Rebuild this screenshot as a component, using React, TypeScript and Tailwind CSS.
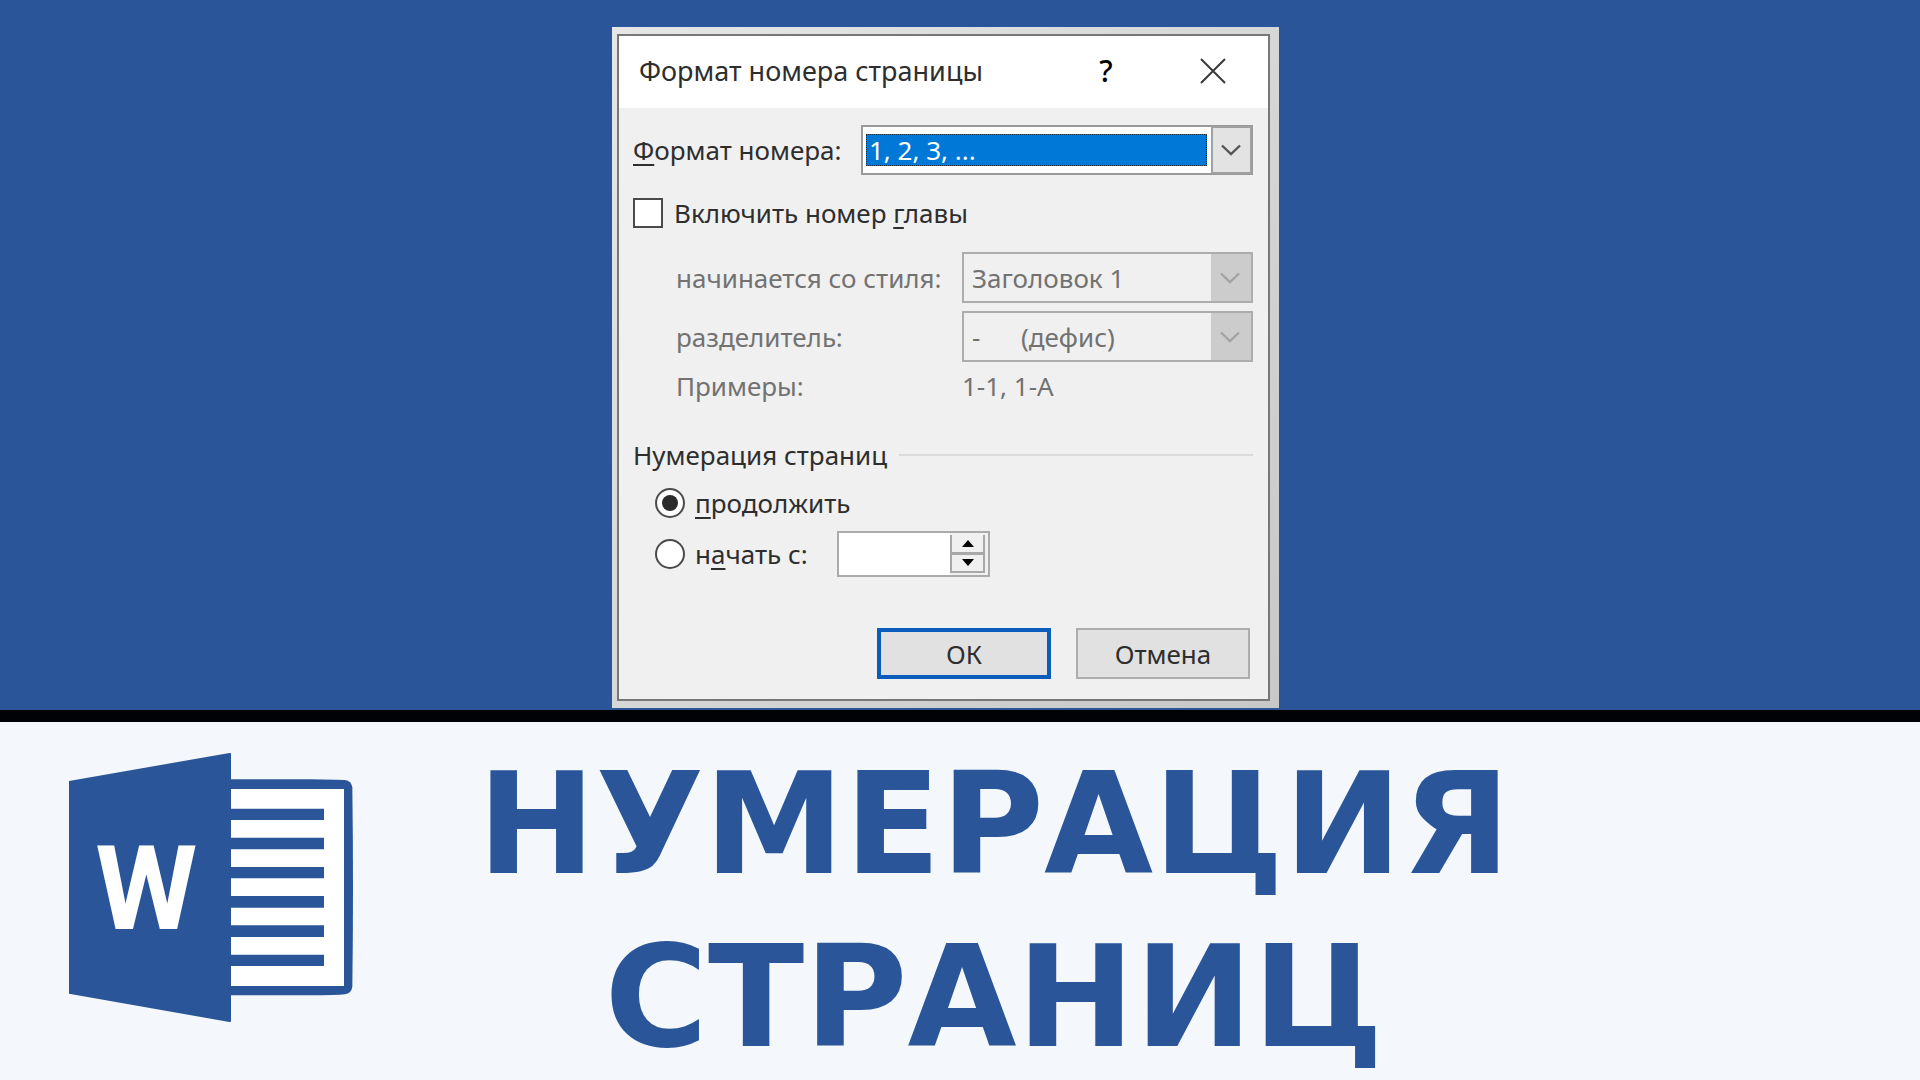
import type { ReactNode } from "react";

function Chevron({ className }: { className: string }) {
  return (
    <svg viewBox="0 0 20 12" className={`h-3 w-5 ${className}`} fill="none" stroke="currentColor" strokeWidth="2.4" aria-hidden="true">
      <path d="M1 1.5 L10 10 L19 1.5" />
    </svg>
  );
}

function DisabledCombo({ id, children }: { id: string; children: ReactNode }) {
  return (
    <div className="flex h-[51px] w-[291px] border-2 border-[#adadad] bg-[#f0f0f0]">
      <select id={id} disabled className="min-w-0 flex-1 appearance-none bg-transparent pl-2 text-[#727272] opacity-100">
        {children}
      </select>
      <span className="flex w-10 items-center justify-center bg-[#cccccc] pr-[2px]">
        <Chevron className="text-[#a3a3a3]" />
      </span>
    </div>
  );
}

function Key({ children }: { children: string }) {
  return <span className="underline decoration-2 underline-offset-4">{children}</span>;
}

const radioStyle =
  "grid size-[30px] appearance-none place-items-center rounded-full border-2 border-[#4a4a4a] bg-white before:size-4 before:rounded-full checked:before:bg-[#2b2b2b]";

function PageNumberDialog() {
  return (
    <div className="w-[667px] bg-linear-to-br from-[#e6e6e6] to-[#c8c8c8] pt-[7px] pr-[9px] pb-[7px] pl-[5px]">
      <form
        role="dialog"
        aria-labelledby="dialog-title"
        onSubmit={(e) => e.preventDefault()}
        className="border-2 border-[#777777] bg-[#f0f0f0] font-['Noto_Sans','Open_Sans',sans-serif] text-[26px] leading-8 text-[#2e2e2e]"
      >
        <header className="flex h-[72px] items-center bg-white pr-[42px] pb-[3px] pl-5">
          <h2 id="dialog-title" className="flex-1 text-[27px]">Формат номера страницы</h2>
          <button type="button" aria-label="Справка" className="w-8 text-center text-[30px] font-medium text-black">?</button>
          <button type="button" aria-label="Закрыть" className="ml-[78px]">
            <svg viewBox="0 0 26 26" className="size-[26px]" stroke="#3a3a3a" strokeWidth="2" aria-hidden="true">
              <path d="M1 1 L25 25 M25 1 L1 25" />
            </svg>
          </button>
        </header>

        <div className="pt-[17px] pr-[15px] pb-5 pl-[14px]">
          <div className="flex items-center justify-between">
            <label htmlFor="format"><Key>Ф</Key>ормат номера:</label>
            <div className="flex h-[50px] w-[392px] border-2 border-[#9a9a9a] bg-white">
              <select
                id="format"
                className="my-[7px] mr-[4px] ml-[3px] min-w-0 flex-1 appearance-none border border-dotted border-[#20303f] bg-[#0078d7] pl-[2px] leading-7 text-white"
              >
                <option>1, 2, 3, ...</option>
              </select>
              <span className="-my-px -mr-px flex w-[41px] items-center justify-center border-2 border-[#a0a0a0] bg-[#e3e3e3] pr-[2px]">
                <Chevron className="text-[#555555]" />
              </span>
            </div>
          </div>

          <label className="mt-[23px] flex h-[30px] items-center gap-[11px]">
            <input type="checkbox" className="size-[30px] appearance-none border-2 border-[#4a4a4a] bg-white" />
            <span>Включить номер <Key>г</Key>лавы</span>
          </label>

          <div className="mt-6 pl-[43px] text-[#727272]">
            <div className="flex items-center justify-between">
              <label htmlFor="style">начинается со стиля:</label>
              <DisabledCombo id="style">
                <option>Заголовок 1</option>
              </DisabledCombo>
            </div>
            <div className="mt-2 flex items-center justify-between">
              <label htmlFor="separator">разделитель:</label>
              <DisabledCombo id="separator">
                <option>{"-\u00a0\u00a0\u00a0\u00a0\u00a0\u00a0(дефис)"}</option>
              </DisabledCombo>
            </div>
            <div className="mt-2 flex justify-between">
              <span>Примеры:</span>
              <span className="w-[291px]">1-1, 1-A</span>
            </div>
          </div>

          <div role="radiogroup" aria-labelledby="numbering" className="mt-[37px]">
            <div className="flex items-center gap-3">
              <h3 id="numbering">Нумерация страниц</h3>
              <span className="h-[2px] flex-1 bg-[#dadada]" />
            </div>
            <label className="mt-[17px] ml-[22px] flex h-[30px] items-center gap-[10px]">
              <input type="radio" name="numbering" defaultChecked className={radioStyle} />
              <span><Key>п</Key>родолжить</span>
            </label>
            <div className="mt-[13px] ml-[22px] flex items-center">
              <label className="flex w-[182px] items-center gap-[10px]">
                <input type="radio" name="numbering" className={radioStyle} />
                <span>н<Key>а</Key>чать с:</span>
              </label>
              <div className="flex h-[46px] w-[153px] border-2 border-[#ababab] bg-[#f0f0f0] pr-[3px]">
                <input type="text" aria-label="Начать с" className="min-w-0 flex-1 bg-white px-2" />
                <div className="my-[2px] flex w-[35px] flex-col">
                  <button type="button" aria-label="Увеличить" className="flex flex-1 items-center justify-center border-2 border-t-0 border-[#a8a8a8]">
                    <svg viewBox="0 0 12 7" className="h-[7px] w-3" aria-hidden="true"><path d="M0 7 L6 0 L12 7 Z" /></svg>
                  </button>
                  <button type="button" aria-label="Уменьшить" className="flex flex-1 items-center justify-center border-2 border-t border-[#a8a8a8]">
                    <svg viewBox="0 0 12 7" className="h-[7px] w-3" aria-hidden="true"><path d="M0 0 L6 7 L12 0 Z" /></svg>
                  </button>
                </div>
              </div>
            </div>
          </div>

          <div className="mt-[51px] mr-[3px] flex justify-end gap-[25px]">
            <button type="submit" className="h-[51px] w-[174px] border-4 border-[#0a5cbd] bg-[#e1e1e1]">ОК</button>
            <button type="button" className="h-[51px] w-[174px] border-2 border-[#adadad] bg-[#e1e1e1]">Отмена</button>
          </div>
        </div>
      </form>
    </div>
  );
}

function WordLogo() {
  return (
    <svg viewBox="57 69 852 807" className="h-[269px] w-[284px] shrink-0" role="img" aria-label="Word">
      <path d="M530 148 H780 Q860 149 885 150 Q904 152 907 172 Q911 470 907 770 Q904 790 885 793 Q860 796 780 796 H530 Z" fill="#2a5699" />
      <path d="M542 177 H882 V768 H542 Z" fill="#ffffff" />
      <path
        d="M540 236 H822 V270 H540 Z M540 323 H822 V358 H540 Z M540 411 H822 V445 H540 Z M540 498 H822 V533 H540 Z M540 586 H822 V621 H540 Z M540 674 H822 V708 H540 Z"
        fill="#2a5699"
      />
      <path d="M57 153 L538 69 L543 70 V875 L538 876 L57 791 Z" fill="#2a5699" />
      <text x="289" y="597" textAnchor="middle" fontSize="350" fontWeight="700" fill="#ffffff" className="font-['Liberation_Sans_Narrow',Roboto,sans-serif]">
        W
      </text>
    </svg>
  );
}

export default function App() {
  return (
    <main className="flex min-h-screen flex-col overflow-hidden bg-[#f4f8fd]">
      <section className="flex justify-center border-b-[12px] border-[#000206] bg-[#2a5699] pt-[27px] pr-[29px] pb-[2px]">
        <PageNumberDialog />
      </section>
      <section className="flex items-start pl-[69px] text-[#2a5699]">
        <div className="pt-[31px]">
          <WordLogo />
        </div>
        <h1 className="-mb-1 flex-1 pt-4 pr-[285px] text-center font-['DejaVu_Sans',sans-serif] text-[141px] leading-[173px] font-bold">
          НУМЕРАЦИЯ
          <br />
          СТРАНИЦ
        </h1>
      </section>
    </main>
  );
}
